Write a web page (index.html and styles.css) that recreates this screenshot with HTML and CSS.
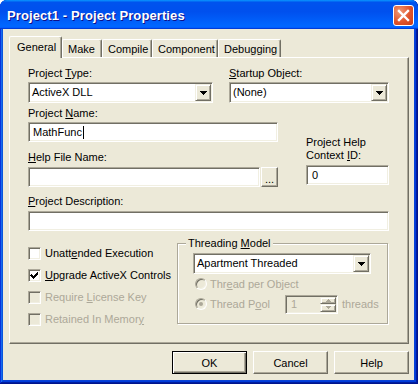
FILE: index.html
```html
<!DOCTYPE html>
<html lang="en">
<head>
  <meta charset="UTF-8" />
  <title>Project1 - Project Properties</title>
  <link rel="stylesheet" href="styles.css">
</head>
<body>
  <div class="window">
    <div class="titlebar">
      <span class="title">Project1 - Project Properties</span>
      <div class="close">
        <svg width="19" height="19" viewBox="0 0 19 19"><path d="M5 5 L14 14 M14 5 L5 14" stroke="#fff" stroke-width="2.4" stroke-linecap="square" fill="none"/></svg>
      </div>
    </div>

    <div class="client">
      <div class="tabs">
        <div class="tab active tab-general">General</div>
        <div class="tab tab-make">Make</div>
        <div class="tab tab-compile">Compile</div>
        <div class="tab tab-component">Component</div>
        <div class="tab tab-debug">Debugging</div>
      </div>

      <div class="panel">
        <div class="row">
          <div class="col-type">
            <label>Project <u>T</u>ype:</label>
            <div class="combo w-type">
              <span class="combo-text">ActiveX DLL</span>
              <span class="drop"><svg width="7" height="4" viewBox="0 0 7 4" shape-rendering="crispEdges"><path d="M0 0h7v1h-1v1h-1v1h-1v1h-1v-1h-1v-1h-1v-1h-1z" fill="#000"/></svg></span>
            </div>
          </div>
          <div class="col-startup">
            <label><u>S</u>tartup Object:</label>
            <div class="combo w-startup">
              <span class="combo-text">(None)</span>
              <span class="drop"><svg width="7" height="4" viewBox="0 0 7 4" shape-rendering="crispEdges"><path d="M0 0h7v1h-1v1h-1v1h-1v1h-1v-1h-1v-1h-1v-1h-1z" fill="#000"/></svg></span>
            </div>
          </div>
        </div>

        <div class="row mid">
          <div class="mid-left">
            <label>Project <u>N</u>ame:</label>
            <div class="text w-name">MathFunc<span class="caret"></span></div>
            <label class="help-label"><u>H</u>elp File Name:</label>
            <div class="browse">
              <div class="text w-help"></div>
              <div class="btn dots">...</div>
            </div>
          </div>
          <div class="mid-right">
            <label class="two-line">Project Help<br>Context <u>I</u>D:</label>
            <div class="text w-ctx">0</div>
          </div>
        </div>

        <div class="desc">
          <label><u>P</u>roject Description:</label>
          <div class="text w-desc"></div>
        </div>

        <div class="row bottom">
          <div class="checks">
            <div class="check">
              <span class="box"></span>
              <span>Unatt<u>e</u>nded Execution</span>
            </div>
            <div class="check">
              <span class="box"><svg width="9" height="9" viewBox="0 0 9 9" shape-rendering="crispEdges"><path d="M1 3h1v1h1v1h1v-1h1v-1h1v-1h1v-1h1v3h-1v1h-1v1h-1v1h-1v1h-1v-1h-1v-1h-1v-1h-1z" fill="#000"/></svg></span>
              <span><u>U</u>pgrade ActiveX Controls</span>
            </div>
            <div class="check disabled">
              <span class="box"></span>
              <span>Require <u>L</u>icense Key</span>
            </div>
            <div class="check disabled">
              <span class="box"></span>
              <span>Retained In Memor<u>y</u></span>
            </div>
          </div>

          <div class="group">
            <span class="legend">Threading <u>M</u>odel</span>
            <div class="combo w-apt">
              <span class="combo-text">Apartment Threaded</span>
              <span class="drop"><svg width="7" height="4" viewBox="0 0 7 4" shape-rendering="crispEdges"><path d="M0 0h7v1h-1v1h-1v1h-1v1h-1v-1h-1v-1h-1v-1h-1z" fill="#000"/></svg></span>
            </div>
            <div class="radio-row disabled">
              <span class="radio"></span>
              <span>Thr<u>e</u>ad per Object</span>
            </div>
            <div class="radio-row disabled">
              <span class="radio on"></span>
              <span class="pool-label">Thread P<u>o</u>ol</span>
              <div class="spin">
                <span class="spin-text">1</span>
                <span class="spin-btns">
                  <span class="spin-btn"><svg width="5" height="3" viewBox="0 0 5 3" shape-rendering="crispEdges"><path d="M2 0h1v1h1v1h1v1h-5v-1h1v-1h1z" fill="#ACA899"/></svg></span>
                  <span class="spin-btn"><svg width="5" height="3" viewBox="0 0 5 3" shape-rendering="crispEdges"><path d="M0 0h5v1h-1v1h-1v1h-1v-1h-1v-1h-1z" fill="#ACA899"/></svg></span>
                </span>
              </div>
              <span class="threads">threads</span>
            </div>
          </div>
        </div>
      </div>

      <div class="actions">
        <div class="btn default">OK</div>
        <div class="btn">Cancel</div>
        <div class="btn">Help</div>
      </div>
    </div>
  </div>
</body>
</html>
```

FILE: styles.css
```css
* {
  margin: 0;
  padding: 0;
  box-sizing: border-box;
}

body {
  background: #fff;
}

.window {
  width: 418px;
  height: 384px;
  display: flex;
  flex-direction: column;
  background: #0842d6;
  border-radius: 7px 7px 0 0;
  overflow: hidden;
  box-shadow: inset -1px -1px #00138c, inset 1px 1px #0831d9, inset -2px -2px #001ea0, inset 2px 2px #166aee, inset -3px -3px #003bda, inset 3px 3px #0855dd;
  font-family: "Liberation Sans", Arial, sans-serif;
  font-size: 11px;
  color: #000;
}

/* title bar */
.titlebar {
  height: 29px;
  flex: none;
  display: flex;
  align-items: center;
  justify-content: space-between;
  padding: 1px 4px 0 7px;
  background: linear-gradient(180deg, #0997ff, #0053ee 8%, #0050ee 40%, #06f 88%, #06f 93%, #005bff 95%, #003dd7 96%, #003dd7);
}

.title {
  color: #fff;
  font-weight: bold;
  font-size: 13px;
  text-shadow: 1px 1px #0f1089;
  letter-spacing: 0.1px;
}

.close {
  width: 21px;
  height: 21px;
  border: 1px solid #fff;
  border-radius: 3px;
  background: radial-gradient(circle at 30% 30%, #f09a76, #e0542c 55%, #c83c16);
  display: flex;
  align-items: center;
  justify-content: center;
}

/* client area */
.client {
  flex: 1;
  margin: 0 4px 4px 3px;
  background: #ece9d8;
  padding: 7px 5px 0 6px;
  display: flex;
  flex-direction: column;
}

.tabs {
  height: 21px;
  display: flex;
  align-items: flex-end;
}

.tab {
  height: 18px;
  border: 1px solid #fff;
  border-right-color: #716f64;
  border-bottom: none;
  border-radius: 2px 2px 0 0;
  box-shadow: inset -1px 0 #aca899;
  padding: 3px 0 0 5px;
  line-height: 13px;
  background: #ece9d8;
}

.tab.active {
  height: 22px;
  margin-bottom: -1px;
  position: relative;
  z-index: 1;
  padding: 4px 0 0 7px;
}

.tab-general { width: 53px; }
.tab-make { width: 40px; }
.tab-compile { width: 50px; }
.tab-component { width: 66px; }
.tab-debug { width: 63px; }

.panel {
  height: 287px;
  border: 1px solid;
  border-color: #fff #716f64 #716f64 #fff;
  box-shadow: inset -1px -1px #aca899;
  padding: 8px 0 0 18px;
}

label {
  display: block;
  height: 14px;
  line-height: 14px;
  margin-bottom: 2px;
}

.row {
  display: flex;
}

.col-type { width: 201px; }
.col-startup { width: 160px; }

/* sunken fields */
.combo,
.text,
.spin {
  border: 1px solid;
  border-color: #aca899 #fff #fff #aca899;
  box-shadow: inset 1px 1px #716f64, inset -1px -1px #f1efe2;
  background: #fff;
}

.combo {
  height: 21px;
  display: flex;
  padding: 1px;
}

.combo-text {
  flex: 1;
  line-height: 17px;
  padding-left: 2px;
}

.drop {
  width: 16px;
  display: flex;
  align-items: center;
  justify-content: center;
  background: #ece9d8;
  border: 1px solid;
  border-color: #f1efe2 #716f64 #716f64 #f1efe2;
  box-shadow: inset 1px 1px #fff, inset -1px -1px #aca899;
}

.w-type { width: 185px; }
.w-startup { width: 160px; }
.w-apt { width: 178px; }

.text {
  height: 20px;
  line-height: 18px;
  padding-left: 4px;
  display: flex;
  align-items: center;
}

.caret {
  width: 1px;
  height: 13px;
  background: #000;
  margin-left: 1px;
}

.mid {
  margin-top: 3px;
}

.mid-left { width: 278px; }

.w-name { width: 250px; }

.help-label {
  margin-top: 8px;
  margin-bottom: 3px;
}

.browse {
  display: flex;
}

.w-help { width: 232px; }

.mid-right {
  margin-top: 30px;
}

.two-line {
  height: 26px;
  line-height: 13px;
  margin-bottom: 3px;
}

.w-ctx {
  width: 83px;
  padding-left: 5px;
}

.desc {
  margin-top: 7px;
}

.desc label {
  margin-bottom: 3px;
}

.w-desc { width: 361px; }

/* raised buttons */
.btn {
  background: #ece9d8;
  border: 1px solid;
  border-color: #fff #716f64 #716f64 #fff;
  box-shadow: inset -1px -1px #aca899;
  display: flex;
  align-items: center;
  justify-content: center;
}

.dots {
  width: 17px;
  height: 20px;
  margin-left: 1px;
  padding-top: 3px;
}

/* checks and group */
.bottom {
  align-items: flex-start;
}

.checks {
  width: 149px;
  margin-top: 11px;
}

.check {
  height: 22px;
  display: flex;
  align-items: center;
  gap: 4px;
}

.box {
  width: 13px;
  height: 13px;
  border: 1px solid;
  border-color: #aca899 #fff #fff #aca899;
  box-shadow: inset 1px 1px #716f64, inset -1px -1px #f1efe2;
  background: #fff;
  display: flex;
  align-items: center;
  justify-content: center;
}

.disabled {
  color: #aca899;
}

.disabled .box {
  background: #ece9d8;
}

.group {
  position: relative;
  width: 211px;
  height: 81px;
  margin-top: 12px;
  border: 1px solid #aca899;
  box-shadow: inset 1px 1px #fff, 1px 1px #fff;
  padding: 9px 0 0 15px;
}

.legend {
  position: absolute;
  top: -8px;
  left: 8px;
  padding: 0 2px;
  line-height: 14px;
  background: #ece9d8;
}

.radio-row {
  height: 20px;
  display: flex;
  align-items: center;
  margin-left: 2px;
  gap: 3px;
}

.radio {
  width: 12px;
  height: 12px;
  border-radius: 50%;
  border: 1px solid;
  border-color: #aca899 #fff #fff #aca899;
  box-shadow: inset 1px 1px #716f64, inset -1px -1px #f1efe2;
  background: #ece9d8;
  display: flex;
  align-items: center;
  justify-content: center;
}

.radio.on::after {
  content: "";
  width: 4px;
  height: 4px;
  border-radius: 50%;
  background: #aca899;
}

.pool-label {
  width: 72px;
}

.spin {
  width: 53px;
  height: 19px;
  display: flex;
  padding: 1px;
  background: #ece9d8;
}

.spin-text {
  flex: 1;
  line-height: 15px;
  padding-left: 4px;
}

.spin-btns {
  width: 16px;
  display: flex;
  flex-direction: column;
}

.spin-btn {
  flex: 1;
  display: flex;
  align-items: center;
  justify-content: center;
  border: 1px solid;
  border-color: #f1efe2 #716f64 #716f64 #f1efe2;
  box-shadow: inset 1px 1px #fff, inset -1px -1px #aca899;
}

.threads {
  margin-left: 1px;
}

/* dialog buttons */
.actions {
  display: flex;
  justify-content: flex-end;
  gap: 6px;
  margin-top: 7px;
}

.actions .btn {
  width: 75px;
  height: 23px;
}

.actions .btn.default {
  border-color: #000;
  box-shadow: inset 1px 1px #fff, inset -1px -1px #716f64, inset -2px -2px #aca899;
}
```
